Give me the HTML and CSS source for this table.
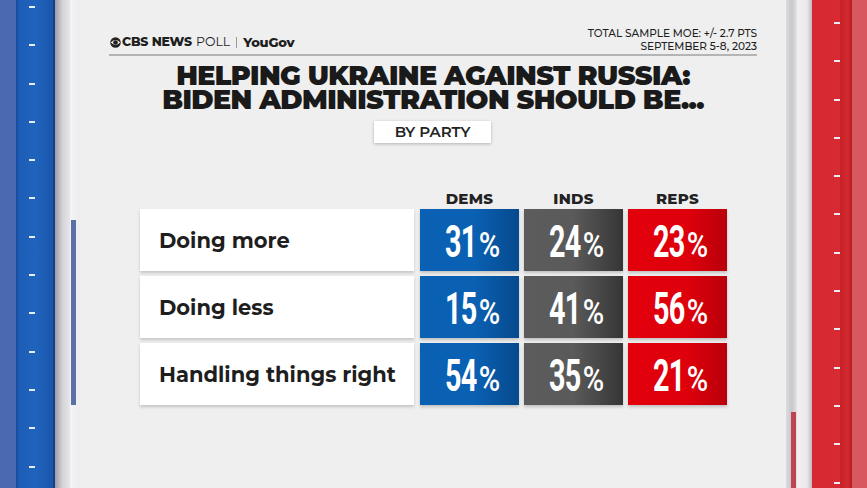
FILE: index.html
```html
<!DOCTYPE html>
<html>
<head>
<meta charset="utf-8">
<link rel="stylesheet" href="styles.css">
</head>
<body>
<div class="stage">
  <div class="rail rail-left">
    <div class="rl-outer"></div>
    <div class="rl-bar"><div class="notches"></div></div>
    <div class="rl-shade"></div>
    <div class="rl-light"><div class="strip strip-blue"></div></div>
  </div>
  <main class="main">
    <header class="head">
      <div class="brand">
        <svg class="eye" width="11" height="11" viewBox="0 0 20 20"><circle cx="10" cy="10" r="9.5" fill="#222"/><path d="M1.5 10 Q10 1 18.5 10 Q10 19 1.5 10Z" fill="#efefef"/><circle cx="10" cy="10" r="4.3" fill="#222"/></svg>
        <span class="cbs">CBS NEWS</span><span class="poll">POLL</span><span class="sep"></span><span class="yougov">YouGov</span>
      </div>
      <div class="meta">
        <div>TOTAL SAMPLE MOE: +/- 2.7 PTS</div>
        <div>SEPTEMBER 5-8, 2023</div>
      </div>
    </header>
    <h1 class="title"><span class="tline">HELPING UKRAINE AGAINST RUSSIA:</span><span class="tline">BIDEN ADMINISTRATION SHOULD BE...</span></h1>
    <div class="tagwrap"><div class="tag">BY PARTY</div></div>
    <div class="table">
      <div class="colh blank"></div>
      <div class="colh">DEMS</div>
      <div class="colh">INDS</div>
      <div class="colh">REPS</div>

      <div class="label">Doing more</div>
      <div class="cell dem"><span class="num">31<small>%</small></span></div>
      <div class="cell ind"><span class="num">24<small>%</small></span></div>
      <div class="cell rep"><span class="num">23<small>%</small></span></div>

      <div class="label">Doing less</div>
      <div class="cell dem"><span class="num">15<small>%</small></span></div>
      <div class="cell ind"><span class="num">41<small>%</small></span></div>
      <div class="cell rep"><span class="num">56<small>%</small></span></div>

      <div class="label">Handling things right</div>
      <div class="cell dem"><span class="num">54<small>%</small></span></div>
      <div class="cell ind"><span class="num">35<small>%</small></span></div>
      <div class="cell rep"><span class="num">21<small>%</small></span></div>
    </div>
  </main>
  <div class="rail rail-right">
    <div class="rr-shade"><div class="strip strip-red"></div></div>
    <div class="rr-light"></div>
    <div class="rr-bar"><div class="notches notches-r"></div></div>
    <div class="rr-edge"></div>
    <div class="rr-outer"></div>
  </div>
</div>
</body>
</html>
```
FILE: styles.css
```css
html, body {
  margin: 0;
  padding: 0;
  background: #efefef;
}
.stage {
  width: 867px;
  height: 488px;
  display: flex;
  overflow: hidden;
  font-family: "Montserrat", "Inter", "Noto Sans", sans-serif;
  color: #222;
}
.rail {
  display: flex;
  height: 100%;
  flex-shrink: 0;
}
.rail-left { width: 80px; }
.rl-outer { width: 16px; background: #4a69ae; }
.rl-bar {
  width: 37px;
  position: relative;
  background: linear-gradient(to right, #17489a 0, #1c5cb6 3px, #2063bd 20px, #1a57ac 36px);
  border-right: 2px solid #163f86;
}
.notches {
  position: absolute;
  left: 13px;
  top: 0;
  width: 6px;
  height: 100%;
  background: repeating-linear-gradient(to bottom, transparent 0 6px, #e8ecf4 6px 8px, transparent 8px 38.3px);
}
.notches-r { left: 22px; top: 16px; }
.rl-shade { width: 15px; background: linear-gradient(to right, #9c9ca4, #d6d6da 8px, #e6e6ea); }
.rl-light { width: 10px; background: linear-gradient(to right, #f4f4f7, #ececee); position: relative; }
.strip { position: absolute; width: 5px; }
.strip-blue { left: 1px; top: 220px; height: 185px; background: #5a6fa6; }

.rail-right { width: 81px; }
.rr-shade { width: 11px; position: relative; background: linear-gradient(to right, #dcdce0, #c8c8cc 6px, #e4e2e6); }
.strip-red { left: 5px; top: 412px; height: 76px; background: #c04350; }
.rr-light { width: 15px; background: linear-gradient(to right, #f2eef2, #ece8ec 10px, #bcbcc0); }
.rr-bar {
  width: 28px;
  position: relative;
  background: linear-gradient(to right, #d62830, #d82a32);
}
.rr-edge { width: 12px; background: linear-gradient(to right, #c92028, #d02a30 8px, #b51a22); }
.rr-outer { width: 15px; background: #d9585f; }

.main {
  flex: 1;
  display: flex;
  flex-direction: column;
  padding: 0 29px;
}
.head {
  display: flex;
  justify-content: space-between;
  align-items: flex-end;
  height: 53px;
  border-bottom: 2px solid #b4b4b4;
  padding-bottom: 1px;
  box-sizing: content-box;
}
.brand {
  display: flex;
  align-items: center;
  font-size: 12.5px;
  line-height: 14px;
  padding-bottom: 4px;
  padding-left: 1px;
  color: #1e1e1e;
}
.eye { margin-right: 1px; }
.cbs { font-weight: 800; letter-spacing: -0.2px; }
.poll { font-weight: 400; margin-left: 4px; letter-spacing: 0; }
.sep { width: 1px; height: 11px; background: #999; margin: 0 6px; }
.yougov { font-weight: 800; font-size: 13px; letter-spacing: -0.2px; }
.meta {
  text-align: right;
  font-size: 10.5px;
  line-height: 13px;
  font-weight: 500;
  color: #1e1e1e;
}
.title {
  margin: 8px 0 0;
  text-align: center;
  font-size: 27px;
  font-weight: 900;
  letter-spacing: -0.6px;
  color: #1a1a1a;
}
.tline {
  display: block;
  line-height: 24px;
}
.tagwrap {
  display: flex;
  justify-content: center;
  margin-top: 9px;
}
.tag {
  width: 117px;
  height: 22px;
  background: #fff;
  box-shadow: 0 1px 3px rgba(0,0,0,0.25);
  text-align: center;
  font-size: 15px;
  line-height: 22px;
  font-weight: 600;
  color: #222;
  margin-right: 1px;
}
.table {
  display: grid;
  grid-template-columns: 275px 99px 99px 99px;
  grid-template-rows: 13px 62px 62px 62px;
  column-gap: 5px;
  row-gap: 5px;
  justify-content: center;
  margin-top: 48px;
  margin-left: 1px;
}
.table .label { margin-right: 1px; }
.colh {
  text-align: center;
  font-size: 15px;
  line-height: 16px;
  font-weight: 800;
  color: #222;
  letter-spacing: 0.3px;
}
.label {
  background: #fff;
  box-shadow: 0 2px 3px rgba(0,0,0,0.18);
  display: flex;
  align-items: center;
  padding-left: 19px;
  font-size: 21px;
  font-weight: 700;
  color: #1e1e1e;
}
.cell {
  display: flex;
  align-items: center;
  justify-content: center;
  box-shadow: 0 2px 3px rgba(0,0,0,0.2);
  overflow: hidden;
}
.dem { background: linear-gradient(to right, #0a60b2 0, #0a60b2 55%, #064a8e 100%); }
.ind { background: linear-gradient(to right, #5c5c5c 0, #5a5a5a 50%, #363636 100%); }
.rep { background: linear-gradient(to right, #e2000b 0, #de000b 60%, #b8000a 100%); }
.num {
  display: inline-block;
  color: #fff;
  font-family: "Roboto", "DejaVu Sans", sans-serif;
  font-weight: 700;
  font-size: 45px;
  line-height: 1;
  letter-spacing: -1px;
  transform: scaleX(0.64);
  margin-top: 3px;
  white-space: nowrap;
}
.num small {
  display: inline-block;
  font-size: 35px;
  font-weight: 500;
  margin-left: 3px;
  transform: scaleX(1.3);
  transform-origin: left center;
}
```
